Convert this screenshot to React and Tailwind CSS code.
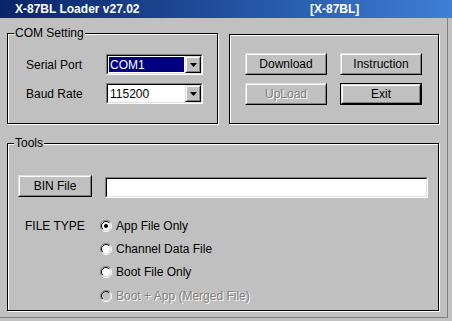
import React from "react";

const raised =
  "border border-t-[#dfdfdf] border-l-[#dfdfdf] border-r-black border-b-black";
const raisedInner =
  "border border-t-white border-l-white border-r-[#808080] border-b-[#808080]";

function Button({ children, disabled, isDefault, w = "w-[82px]", h = "h-[22px]" }) {
  const inner = (
    <div className={`${raised} ${isDefault ? "w-full h-full" : w + " " + h} bg-[#c0c0c0]`}>
      <div
        className={`${raisedInner} w-full h-full flex items-center justify-center ${
          disabled ? "text-[#808080] [text-shadow:1px_1px_0_#ffffff]" : "text-black"
        }`}
      >
        {children}
      </div>
    </div>
  );
  if (isDefault) {
    return <div className={`${w} ${h} border border-black`}>{inner}</div>;
  }
  return inner;
}

function Sunken({ className, children }) {
  return (
    <div className={`border border-t-[#808080] border-l-[#808080] border-r-white border-b-white ${className}`}>
      <div className="border border-t-black border-l-black border-r-[#dfdfdf] border-b-[#dfdfdf] w-full h-full bg-white flex">
        {children}
      </div>
    </div>
  );
}

function Combo({ value, selected }) {
  return (
    <Sunken className="w-[97px] h-[21px]">
      <div className="flex-1 flex items-center p-[1px]">
        <div
          className={`w-full h-full flex items-center pl-[1px] ${
            selected ? "bg-[#000080] text-white" : "text-black"
          }`}
        >
          {value}
        </div>
      </div>
      <div className={`${raised} w-[16px] h-full bg-[#c0c0c0]`}>
        <div className={`${raisedInner} w-full h-full flex items-center justify-center`}>
          <svg width="7" height="4" viewBox="0 0 7 4">
            <path d="M0 0H7L3.5 4Z" fill="black" />
          </svg>
        </div>
      </div>
    </Sunken>
  );
}

function GroupBox({ label, className, children }) {
  return (
    <div
      className={`relative border border-black shadow-[1px_1px_0_#ffffff,inset_1px_1px_0_#ffffff] ${className}`}
    >
      {label && (
        <span className="absolute left-[6px] top-[-8px] bg-[#c0c0c0] px-[1px] leading-[14px]">
          {label}
        </span>
      )}
      {children}
    </div>
  );
}

function Radio({ checked, disabled, children, h = "h-[23px]" }) {
  return (
    <div className={`flex items-center ${h} gap-[4px]`}>
      <svg width="12" height="12" viewBox="0 0 12 12">
        <path d="M10.5 2.5 A5.5 5.5 0 0 0 1.5 9.5" stroke="#808080" fill="none" />
        <path d="M1.5 9.5 A5.5 5.5 0 0 0 10.5 2.5" stroke="#ffffff" fill="none" />
        <circle cx="6" cy="6" r="4.5" fill={disabled ? "#c0c0c0" : "#ffffff"} />
        <path d="M9.2 2.8 A4.5 4.5 0 0 0 2.8 9.2" stroke="#000000" fill="none" />
        <path d="M2.8 9.2 A4.5 4.5 0 0 0 9.2 2.8" stroke="#dfdfdf" fill="none" />
        {checked && <circle cx="6" cy="6" r="2" fill="#000000" />}
      </svg>
      <span className={disabled ? "text-[#808080] [text-shadow:1px_1px_0_#ffffff]" : ""}>
        {children}
      </span>
    </div>
  );
}

export default function App() {
  return (
    <div
      className="w-[452px] h-[321px] bg-[#c0c0c0] text-[12px] text-black flex flex-col overflow-hidden"
      style={{ fontFamily: '"Liberation Sans", Arial, sans-serif' }}
    >
      <div className="h-[18px] shrink-0 bg-gradient-to-r from-[#0a246a] to-[#3f7fd6] text-white font-bold text-[12px] flex items-center">
        <span className="pl-[15px] w-[310px]">X-87BL Loader v27.02</span>
        <span>[X-87BL]</span>
      </div>
      <div className="flex flex-1">
        <div className="w-[448px] h-[300px] border-r border-b border-[#808080] flex flex-col pl-[7px] pt-[15px]">
          <div className="flex gap-[11px]">
            <GroupBox label="COM Setting" className="w-[211px] h-[91px] pt-[20px] pl-[18px] flex flex-col gap-[8px]">
              <div className="flex items-center">
                <span className="w-[80px]">Serial Port</span>
                <Combo value="COM1" selected />
              </div>
              <div className="flex items-center">
                <span className="w-[80px]">Baud Rate</span>
                <Combo value="115200" />
              </div>
            </GroupBox>
            <GroupBox className="mt-[1px] w-[210px] h-[90px] pt-[18px] pl-[15px]">
              <div className="grid grid-cols-[82px_82px] gap-x-[13px] gap-y-[8px]">
                <Button>Download</Button>
                <Button>Instruction</Button>
                <Button disabled>UpLoad</Button>
                <Button isDefault>Exit</Button>
              </div>
            </GroupBox>
          </div>
          <GroupBox label="Tools" className="mt-[19px] w-[432px] h-[168px] pt-[31px] pl-[10px]">
            <div className="flex items-start gap-[13px]">
              <Button w="w-[74px]">BIN File</Button>
              <Sunken className="mt-[2px] w-[323px] h-[21px]" />
            </div>
            <div className="flex mt-[16px] pl-[7px]">
              <div className="w-[75px] h-[23px] flex items-center">FILE TYPE</div>
              <div className="flex flex-col">
                <Radio checked>App File Only</Radio>
                <Radio>Channel Data File</Radio>
                <Radio h="h-[24px]">Boot File Only</Radio>
                <Radio disabled h="h-[24px]">Boot + App (Merged File)</Radio>
              </div>
            </div>
          </GroupBox>
        </div>
      </div>
    </div>
  );
}
